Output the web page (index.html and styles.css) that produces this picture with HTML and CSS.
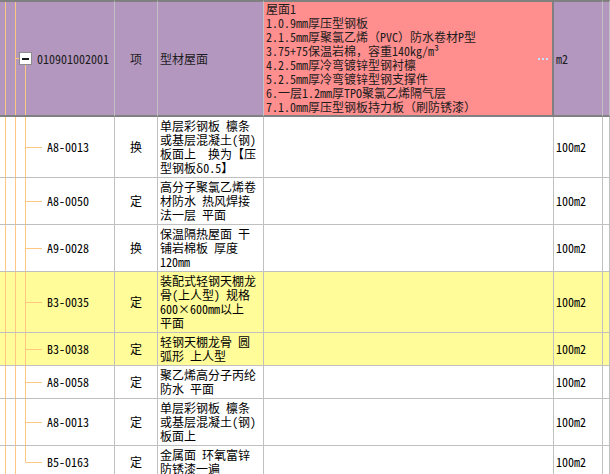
FILE: index.html
```html
<!DOCTYPE html>
<html lang="zh-CN">
<head>
<meta charset="utf-8">
<title>清单</title>
<link rel="stylesheet" href="styles.css">
</head>
<body>
<div class="grid">
  <div class="row head">
    <div class="cell tree tree-root"><span class="toggle"><span class="minus"></span></span><span class="code-text">010901002001</span></div>
    <div class="cell type">项</div>
    <div class="cell name mid">型材屋面</div>
    <div class="cell feature">屋面1<br>1.0.9mm厚压型钢板<br>2.1.5mm厚聚氯乙烯（PVC）防水卷材P型<br>3.75+75保温岩棉，容重140kg/m³<br>4.2.5mm厚冷弯镀锌型钢衬檩<br>5.2.5mm厚冷弯镀锌型钢支撑件<br>6.一层1.2mm厚TPO聚氯乙烯隔气层<br>7.1.0mm厚压型钢板持力板（刷防锈漆）<span class="more"><i></i><i></i><i></i></span></div>
    <div class="cell unit">m2</div>
    <div class="cell extra"></div>
  </div>

  <div class="row">
    <div class="cell tree"><span class="branch"></span>A8-0013</div>
    <div class="cell type">换</div>
    <div class="cell name">单层彩钢板 檩条<br>或基层混凝土(钢)<br>板面上&nbsp;&nbsp;换为【压<br>型钢板δ0.5】</div>
    <div class="cell feature"></div>
    <div class="cell unit">100m2</div>
    <div class="cell extra"></div>
  </div>

  <div class="row">
    <div class="cell tree"><span class="branch"></span>A8-0050</div>
    <div class="cell type">定</div>
    <div class="cell name">高分子聚氯乙烯卷<br>材防水 热风焊接<br>法一层 平面</div>
    <div class="cell feature"></div>
    <div class="cell unit">100m2</div>
    <div class="cell extra"></div>
  </div>

  <div class="row">
    <div class="cell tree"><span class="branch"></span>A9-0028</div>
    <div class="cell type">换</div>
    <div class="cell name">保温隔热屋面 干<br>铺岩棉板 厚度<br>120mm</div>
    <div class="cell feature"></div>
    <div class="cell unit">100m2</div>
    <div class="cell extra"></div>
  </div>

  <div class="row yellow">
    <div class="cell tree"><span class="branch"></span>B3-0035</div>
    <div class="cell type">定</div>
    <div class="cell name">装配式轻钢天棚龙<br>骨(上人型) 规格<br>600×600mm以上<br>平面</div>
    <div class="cell feature"></div>
    <div class="cell unit">100m2</div>
    <div class="cell extra"></div>
  </div>

  <div class="row yellow">
    <div class="cell tree"><span class="branch"></span>B3-0038</div>
    <div class="cell type">定</div>
    <div class="cell name">轻钢天棚龙骨 圆<br>弧形 上人型</div>
    <div class="cell feature"></div>
    <div class="cell unit">100m2</div>
    <div class="cell extra"></div>
  </div>

  <div class="row">
    <div class="cell tree"><span class="branch"></span>A8-0058</div>
    <div class="cell type">定</div>
    <div class="cell name">聚乙烯高分子丙纶<br>防水 平面</div>
    <div class="cell feature"></div>
    <div class="cell unit">100m2</div>
    <div class="cell extra"></div>
  </div>

  <div class="row">
    <div class="cell tree"><span class="branch"></span>A8-0013</div>
    <div class="cell type">定</div>
    <div class="cell name">单层彩钢板 檩条<br>或基层混凝土(钢)<br>板面上</div>
    <div class="cell feature"></div>
    <div class="cell unit">100m2</div>
    <div class="cell extra"></div>
  </div>

  <div class="row">
    <div class="cell tree last"><span class="branch"></span>B5-0163</div>
    <div class="cell type">定</div>
    <div class="cell name">金属面 环氧富锌<br>防锈漆一遍</div>
    <div class="cell feature"></div>
    <div class="cell unit">100m2</div>
    <div class="cell extra"></div>
  </div>
</div>
</body>
</html>
```
FILE: styles.css
```css
html, body {
  margin: 0;
  padding: 0;
  overflow: hidden;
  background: #ffffff;
}

body {
  font-family: "Noto Sans Mono CJK SC", "Noto Sans CJK SC", "DejaVu Sans Mono", monospace;
  font-size: 12px;
  line-height: 14px;
  color: #000000;
}

.grid {
  display: grid;
  grid-template-columns: 115px 43px 106px 290px 49px 1fr;
  width: 610px;
}

.row {
  display: contents;
}

.cell {
  box-sizing: border-box;
  border-right: 1px solid #c0c0c0;
  border-bottom: 1px solid #c0c0c0;
  background: #ffffff;
  padding: 2px 0 2px 2px;
  white-space: nowrap;
  overflow: hidden;
}

.row.yellow > .cell {
  background-color: #fffc99;
}

/* header row */
.row.head > .cell {
  height: 117px;
  border-top: 2px solid #808080;
  border-bottom: 2px solid #808080;
  background-color: #b497bf;
  color: #1c1c1c;
  padding-top: 0;
  padding-bottom: 0;
}

.row.head > .cell.feature {
  background-color: #ff8e8e;
  border-right: 2px solid #808080;
  position: relative;
  padding-top: 0;
}

.type,
.unit,
.mid {
  display: flex;
  align-items: center;
}

.type {
  justify-content: center;
  padding-left: 0;
}

/* tree column */
.tree {
  display: flex;
  align-items: center;
  padding-left: 26px;
  background-image:
    linear-gradient(#ffc880, #ffc880),
    linear-gradient(#ffc880, #ffc880),
    linear-gradient(#ffc880, #ffc880);
  background-repeat: no-repeat;
  background-size: 1px 100%, 1px 100%, 1px 100%;
  background-position: 5px 0, 15px 0, 25px 0;
  background-origin: border-box;
}

.tree.last {
  background-size: 1px 100%, 1px 100%, 1px 50%;
}

.row.head > .cell.tree-root {
  padding-left: 16px;
  background-position: 5px 0, 15px 0, 25px 64px;
}

.branch {
  display: block;
  width: 16px;
  height: 1px;
  margin-right: 5px;
  background: #ffc880;
  flex: none;
}

.toggle {
  position: relative;
  box-sizing: border-box;
  display: flex;
  align-items: center;
  justify-content: center;
  width: 13px;
  height: 13px;
  margin-left: 3px;
  margin-right: 5px;
  border: 1px solid #8c8c8c;
  background: #ffffff;
  flex: none;
}

.toggle::before {
  content: "";
  position: absolute;
  left: -4px;
  top: 5px;
  width: 3px;
  height: 1px;
  background: #ffc880;
}

.minus {
  display: block;
  width: 7px;
  height: 2px;
  background: #1a1a1a;
}

.more {
  position: absolute;
  right: 4px;
  top: 56px;
  display: flex;
  gap: 2px;
}

.more i {
  display: block;
  width: 2px;
  height: 2px;
  background: #c4e2fa;
}
```
